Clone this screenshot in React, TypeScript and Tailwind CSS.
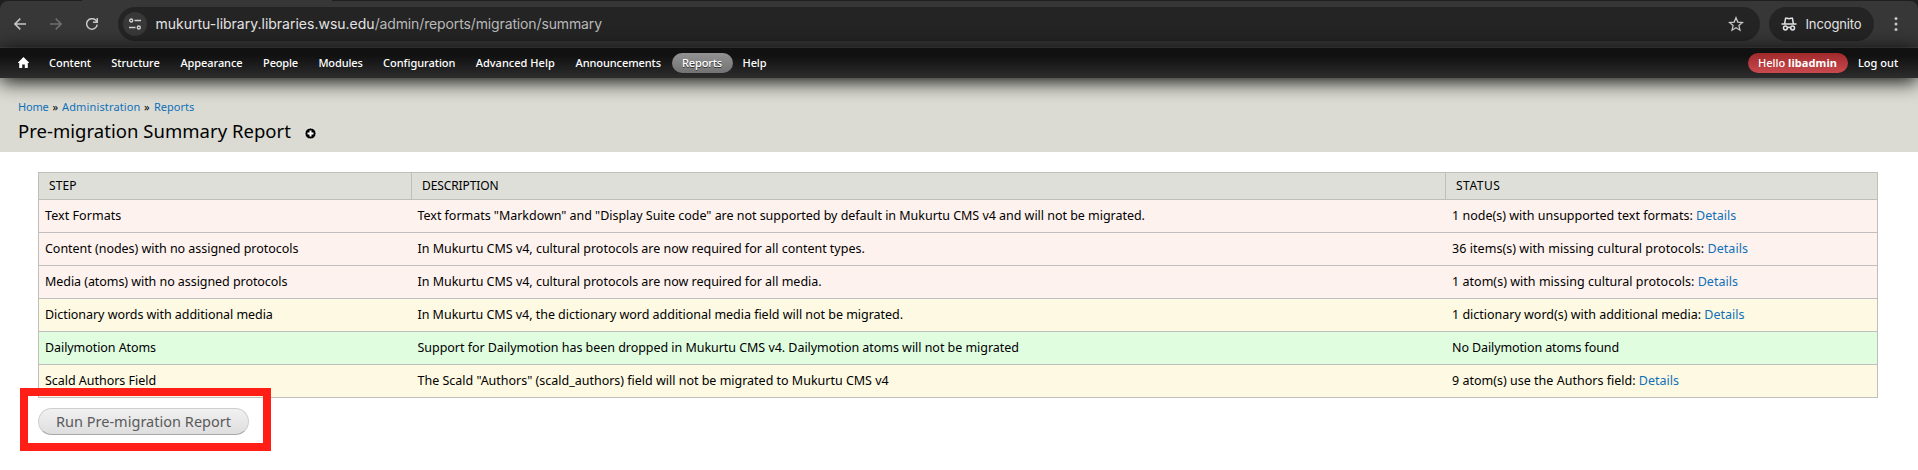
import type { ReactNode } from "react";

const nav: { label: string; cls: string; active?: boolean }[] = [
  { label: "Content", cls: "w-[62px] tracking-[-0.04px]" },
  { label: "Structure", cls: "w-[69px] tracking-[-0.08px]" },
  { label: "Appearance", cls: "w-[83px] tracking-[-0.08px]" },
  { label: "People", cls: "w-[55px] tracking-[-0.18px]" },
  { label: "Modules", cls: "w-[65px] tracking-[-0.14px]" },
  { label: "Configuration", cls: "w-[92.5px] tracking-[-0.03px]" },
  { label: "Advanced Help", cls: "w-[99.5px] tracking-[0.03px]" },
  { label: "Announcements", cls: "w-[106.5px] tracking-[-0.08px]" },
  { label: "Reports", cls: "w-[61px] tracking-[-0.14px]", active: true },
  { label: "Help", cls: "w-[44px] tracking-[-0.08px]" },
];

type Cell = { text: string; cls: string };
type Row = { tone: string; step: Cell; desc: Cell; status: Cell; details?: boolean };

const error = "bg-[#fef2ee]";
const warning = "bg-[#fef9e2]";
const ok = "bg-[#e0fde0]";

const rows: Row[] = [
  {
    tone: error,
    step: { text: "Text Formats", cls: "tracking-[0.06px]" },
    desc: {
      text: 'Text formats "Markdown" and "Display Suite code" are not supported by default in Mukurtu CMS v4 and will not be migrated.',
      cls: "tracking-[-0.03px]",
    },
    status: { text: "1 node(s) with unsupported text formats:", cls: "tracking-[0px]" },
    details: true,
  },
  {
    tone: error,
    step: { text: "Content (nodes) with no assigned protocols", cls: "tracking-[-0.03px]" },
    desc: {
      text: "In Mukurtu CMS v4, cultural protocols are now required for all content types.",
      cls: "tracking-[-0.02px]",
    },
    status: { text: "36 items(s) with missing cultural protocols:", cls: "tracking-[0.05px]" },
    details: true,
  },
  {
    tone: error,
    step: { text: "Media (atoms) with no assigned protocols", cls: "tracking-[-0.06px]" },
    desc: {
      text: "In Mukurtu CMS v4, cultural protocols are now required for all media.",
      cls: "tracking-[-0.02px]",
    },
    status: { text: "1 atom(s) with missing cultural protocols:", cls: "tracking-[0.03px]" },
    details: true,
  },
  {
    tone: warning,
    step: { text: "Dictionary words with additional media", cls: "tracking-[-0.05px]" },
    desc: {
      text: "In Mukurtu CMS v4, the dictionary word additional media field will not be migrated.",
      cls: "tracking-[-0.03px]",
    },
    status: { text: "1 dictionary word(s) with additional media:", cls: "tracking-[-0.01px]" },
    details: true,
  },
  {
    tone: ok,
    step: { text: "Dailymotion Atoms", cls: "tracking-[-0.07px]" },
    desc: {
      text: "Support for Dailymotion has been dropped in Mukurtu CMS v4. Dailymotion atoms will not be migrated",
      cls: "tracking-[-0.04px]",
    },
    status: { text: "No Dailymotion atoms found", cls: "tracking-[-0.11px]" },
  },
  {
    tone: warning,
    step: { text: "Scald Authors Field", cls: "tracking-[-0.03px]" },
    desc: {
      text: 'The Scald "Authors" (scald_authors) field will not be migrated to Mukurtu CMS v4',
      cls: "tracking-[-0.01px]",
    },
    status: { text: "9 atom(s) use the Authors field:", cls: "tracking-[0.01px]" },
    details: true,
  },
];

function Link({ children, className = "" }: { children: ReactNode; className?: string }) {
  return (
    <a href="#" className={`text-[#0f70b8] ${className}`}>
      {children}
    </a>
  );
}

function BrowserBar() {
  return (
    <div className="bg-[#1f1f1f]">
      <div className="flex h-px">
        <div className="ml-[82px] w-[250px] bg-[#373737]" />
      </div>
      <div className="flex h-[47px] items-center rounded-t-[8px] border-b border-[#474747] bg-[#373737] font-[Inter,sans-serif]">
        <svg className="ml-[14px] h-3 w-3" viewBox="0 0 12 12" fill="none" stroke="#c7c7c7" strokeWidth="1.5">
          <path d="M12 6H1M6.3 0.6L0.9 6l5.4 5.4" />
        </svg>
        <svg className="ml-6 h-3 w-3" viewBox="0 0 12 12" fill="none" stroke="#707070" strokeWidth="1.5">
          <path d="M0 6h11M5.7 0.6L11.1 6l-5.4 5.4" />
        </svg>
        <svg className="ml-6 h-3 w-3" viewBox="0 0 12 12" fill="none" stroke="#c7c7c7" strokeWidth="1.5">
          <path d="M11.2 6.6A5.3 5.3 0 1 1 9.8 2.3L11.2 3.8M11.3 0V4.3H7" />
        </svg>
        <div className="ml-5 flex h-[34px] w-[1642px] shrink-0 items-center rounded-full bg-[#242424] pl-[5px]">
          <div className="flex size-6 items-center justify-center rounded-full bg-[#383838]">
            <svg className="h-3 w-3" viewBox="0 0 12 12" fill="none" stroke="#d0d0d0" strokeWidth="1.4">
              <circle cx="2.2" cy="2.5" r="1.5" />
              <path d="M5.5 2.5H12M0 9.5h6.5" />
              <circle cx="9.8" cy="9.5" r="1.5" />
            </svg>
          </div>
          <div className="ml-[8.5px] flex-1 pb-px text-[14px] whitespace-nowrap text-[#b9b9b9]">
            <span className="text-[#e3e3e3]">mukurtu-library.libraries.wsu.edu</span>
            <span className="tracking-[-0.13px]">/admin/reports/migration/summary</span>
          </div>
          <svg className="mr-4 size-4" viewBox="0 0 16 16" fill="none" stroke="#c7c7c7" strokeWidth="1.3">
            <path d="M8 1.8l1.8 4.3 4.7.4-3.6 3.1 1.1 4.6L8 11.8l-4 2.4 1.1-4.6L1.5 6.5l4.7-.4z" />
          </svg>
        </div>
        <div className="ml-[9px] flex h-[34px] w-[105px] shrink-0 items-center rounded-full bg-[#242424] pl-[12px]">
          <svg className="h-[14px] w-4" viewBox="0 0 16 14" fill="none" stroke="#e3e3e3" strokeWidth="1.5">
            <path d="M0.5 7h15M3.6 6.8L4.6 1.2h1.6L8 1.8l1.8-.6h1.6l1 5.6" />
            <circle cx="4.4" cy="11" r="1.9" />
            <circle cx="11.6" cy="11" r="1.9" />
            <path d="M6.3 10.8q1.7-.9 3.4 0" />
          </svg>
          <span className="ml-[8.5px] pt-px text-[13px] tracking-[-0.12px] text-[#e3e3e3]">Incognito</span>
        </div>
        <svg className="ml-5 h-[14px] w-[4px]" viewBox="0 0 4 14" fill="#c7c7c7">
          <circle cx="2" cy="1.6" r="1.5" />
          <circle cx="2" cy="7" r="1.5" />
          <circle cx="2" cy="12.4" r="1.5" />
        </svg>
      </div>
    </div>
  );
}

function Toolbar() {
  return (
    <div className="relative z-10 flex h-[30px] items-center bg-gradient-to-b from-[#111111] from-25% to-[#2d2d2d] pr-[9.5px] text-[11px] font-medium text-white shadow-[0_3px_20px_#000]">
      <svg className="mr-[10px] ml-[18px] h-[11px] w-[11px] -translate-y-px" viewBox="0 0 11 11" fill="#fff">
        <path d="M5.5 0L11 5.6V6H9.8v5H6.8V7.6H4.2V11H1.2V6H0v-.4z" />
      </svg>
      {nav.map((n) => (
        <a
          key={n.label}
          href="#"
          className={`flex h-5 shrink-0 items-center justify-center rounded-full whitespace-nowrap ${n.cls} ${
            n.active ? "bg-gradient-to-b from-[#929292] to-[#737373] [text-shadow:0_1px_0_#333]" : ""
          }`}
        >
          {n.label}
        </a>
      ))}
      <div className="ml-auto flex items-center">
        <a
          href="#"
          className="flex h-5 w-[100px] items-center justify-center rounded-full bg-gradient-to-b from-[#a0282b] to-[#c94a4e] whitespace-pre"
        >
          <span className="tracking-[0px]">Hello </span>
          <span className="font-bold tracking-[0.1px]">libadmin</span>
        </a>
        <a href="#" className="flex w-[61px] justify-center tracking-[0.02px] whitespace-nowrap">
          Log out
        </a>
      </div>
    </div>
  );
}

const th = "border border-[#bebfb9] pl-[10px] text-left text-[12px] font-normal";

export default function App() {
  return (
    <div className="h-[470px] overflow-hidden bg-white font-['Noto_Sans',sans-serif] text-black">
      <BrowserBar />
      <Toolbar />
      <header className="h-[74px] bg-[#dbdbd3] pt-[20px] pl-[18px]">
        <nav className="flex h-[18px] items-center text-[11px] leading-[18px] whitespace-nowrap">
          <Link className="w-[34.5px] tracking-[-0.2px]">Home</Link>
          <span className="w-[9.5px]">»</span>
          <Link className="w-[82px] tracking-[0.14px]">Administration</Link>
          <span className="w-[10px]">»</span>
          <Link>Reports</Link>
        </nav>
        <div className="mt-[2px] flex h-[25px] items-center">
          <h1 className="text-[18.5px] leading-[25px] tracking-[0.03px] whitespace-nowrap">
            Pre-migration Summary Report
          </h1>
          <svg className="mt-[6px] ml-[13.5px] size-[13px]" viewBox="0 0 13 13">
            <circle cx="6.5" cy="6.5" r="5.6" fill="#000" stroke="#f3f3ee" strokeWidth="1" />
            <path d="M6.5 3.5v6M3.5 6.5h6" stroke="#fff" strokeWidth="2" />
          </svg>
        </div>
      </header>
      <main className="px-[38px] pt-5">
        <table className="w-[1839px] table-fixed border-collapse text-[12.5px] leading-4">
          <colgroup>
            <col className="w-[373px]" />
            <col className="w-[1034px]" />
            <col className="w-[432px]" />
          </colgroup>
          <thead>
            <tr className="h-[27px] bg-[#dddfd8]">
              <th className={`${th} tracking-[0.08px]`}>STEP</th>
              <th className={`${th} tracking-[-0.1px]`}>DESCRIPTION</th>
              <th className={`${th} tracking-[0.5px]`}>STATUS</th>
            </tr>
          </thead>
          <tbody className="border-x border-[#bebfb9]">
            {rows.map((r) => (
              <tr key={r.step.text} className={`h-[33px] border-b border-[#bfbfbf] ${r.tone}`}>
                <td className={`pl-[6px] whitespace-nowrap ${r.step.cls}`}>{r.step.text}</td>
                <td className={`pl-[6px] whitespace-nowrap ${r.desc.cls}`}>{r.desc.text}</td>
                <td className={`pl-[6.5px] whitespace-nowrap ${r.status.cls}`}>
                  {r.status.text}
                  {r.details && (
                    <>
                      {" "}
                      <Link>Details</Link>
                    </>
                  )}
                </td>
              </tr>
            ))}
          </tbody>
        </table>
        <div className="relative mt-[10px] w-fit">
          <button className="block h-[27px] w-[211px] rounded-full border border-[#cfcfcf] border-b-[#a8a8a8] bg-gradient-to-b from-[#f1f1f1] to-[#dedede] text-[14.5px] leading-[25px] tracking-[0.02px] whitespace-nowrap text-[#5a5a5a]">
            Run Pre-migration Report
          </button>
          <div className="pointer-events-none absolute -top-5 -left-[18px] h-[63px] w-[251px] border-8 border-[#ff1f16]" />
        </div>
      </main>
    </div>
  );
}
